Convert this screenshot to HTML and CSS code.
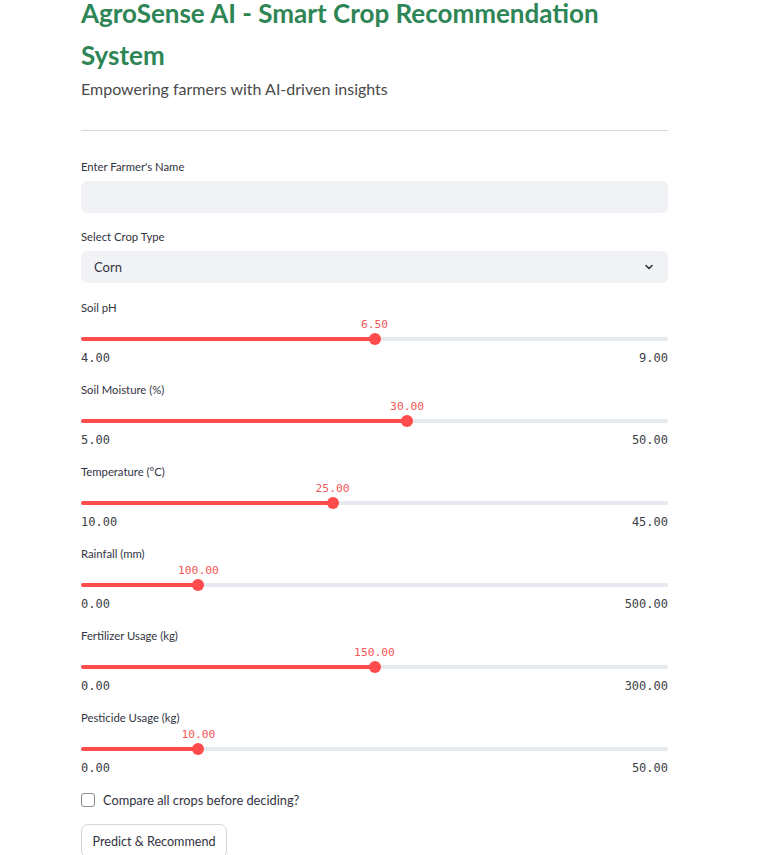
FILE: index.html
```html
<!DOCTYPE html>
<html>
<head>
<meta charset="utf-8">
<link rel="stylesheet" href="styles.css">
</head>
<body>
<main class="app">
  <h1 class="title">AgroSense AI - Smart Crop Recommendation System</h1>
  <p class="subtitle">Empowering farmers with AI-driven insights</p>
  <hr class="divider">

  <div class="field">
    <div class="label">Enter Farmer's Name</div>
    <div class="input"></div>
  </div>

  <div class="field">
    <div class="label">Select Crop Type</div>
    <div class="input select">
      <span>Corn</span>
      <svg class="chev" width="10" height="10" viewBox="0 0 10 10"><path d="M2 3.5 L5 6.5 L8 3.5" fill="none" stroke="#31333F" stroke-width="1.6" stroke-linecap="round" stroke-linejoin="round"/></svg>
    </div>
  </div>

  <div class="slider">
    <div class="label">Soil pH</div>
    <div class="rail"><div class="track"><div class="fill" style="width:50%"></div></div><div class="thumb" style="left:50%"><span class="val">6.50</span></div></div>
    <div class="ticks"><span>4.00</span><span>9.00</span></div>
  </div>

  <div class="slider">
    <div class="label">Soil Moisture (%)</div>
    <div class="rail"><div class="track"><div class="fill" style="width:55.56%"></div></div><div class="thumb" style="left:55.56%"><span class="val">30.00</span></div></div>
    <div class="ticks"><span>5.00</span><span>50.00</span></div>
  </div>

  <div class="slider">
    <div class="label">Temperature (°C)</div>
    <div class="rail"><div class="track"><div class="fill" style="width:42.86%"></div></div><div class="thumb" style="left:42.86%"><span class="val">25.00</span></div></div>
    <div class="ticks"><span>10.00</span><span>45.00</span></div>
  </div>

  <div class="slider">
    <div class="label">Rainfall (mm)</div>
    <div class="rail"><div class="track"><div class="fill" style="width:20%"></div></div><div class="thumb" style="left:20%"><span class="val">100.00</span></div></div>
    <div class="ticks"><span>0.00</span><span>500.00</span></div>
  </div>

  <div class="slider">
    <div class="label">Fertilizer Usage (kg)</div>
    <div class="rail"><div class="track"><div class="fill" style="width:50%"></div></div><div class="thumb" style="left:50%"><span class="val">150.00</span></div></div>
    <div class="ticks"><span>0.00</span><span>300.00</span></div>
  </div>

  <div class="slider">
    <div class="label">Pesticide Usage (kg)</div>
    <div class="rail"><div class="track"><div class="fill" style="width:20%"></div></div><div class="thumb" style="left:20%"><span class="val">10.00</span></div></div>
    <div class="ticks"><span>0.00</span><span>50.00</span></div>
  </div>

  <label class="check"><span class="box"></span><span>Compare all crops before deciding?</span></label>

  <button class="btn">Predict &amp; Recommend</button>
</main>
</body>
</html>
```

FILE: styles.css
```css
* { box-sizing: border-box; }
html, body { margin: 0; padding: 0; background: #fff; }
body {
  font-family: "Lato", "Noto Sans", sans-serif;
  color: #31333F;
  overflow: hidden;
  height: 855px;
}
.app {
  width: 587px;
  margin-left: 81px;
  display: flex;
  flex-direction: column;
}
.title {
  margin: -8px 0 0 0;
  font-size: 26px;
  line-height: 42px;
  font-weight: 700;
  color: #2E8555;
}
.subtitle {
  margin: 1px 0 0 0;
  font-size: 16px;
  line-height: 24px;
  color: #4a4a4a;
}
.divider {
  margin: 29px 0 0 0;
  border: 0;
  border-top: 1px solid #d6d6d6;
  height: 0;
}
.field {
  display: flex;
  flex-direction: column;
  gap: 6px;
  margin-top: 16px;
}
.field:first-of-type { margin-top: 28px; }
.label {
  font-size: 11.3px;
  line-height: 16px;
  color: #31333F;
}
.input {
  height: 32px;
  background: #F0F2F6;
  border-radius: 6px;
}
.select {
  display: flex;
  align-items: center;
  justify-content: space-between;
  padding: 0 14px 0 13px;
  font-size: 13px;
}
.chev { display: block; }
.slider {
  margin-top: 17px;
  display: flex;
  flex-direction: column;
}
.slider + .slider { margin-top: 16px; }
.rail {
  position: relative;
  height: 28px;
}
.track {
  position: absolute;
  left: 0;
  right: 0;
  top: 21px;
  height: 4px;
  border-radius: 2px;
  background: #E6E9EF;
  overflow: hidden;
}
.fill {
  height: 100%;
  background: #FF4B4B;
}
.thumb {
  position: absolute;
  top: 17px;
  width: 12px;
  height: 12px;
  margin-left: -6px;
  border-radius: 50%;
  background: #FF4B4B;
}
.val {
  position: absolute;
  bottom: 13px;
  left: 50%;
  transform: translateX(-50%);
  font-family: "DejaVu Sans Mono", "Liberation Mono", monospace;
  font-size: 11.3px;
  line-height: 14px;
  color: #F25A5A;
  white-space: nowrap;
}
.ticks {
  margin-top: 6px;
  display: flex;
  justify-content: space-between;
  font-family: "DejaVu Sans Mono", "Liberation Mono", monospace;
  font-size: 12px;
  line-height: 16px;
  color: #3d3f48;
}
.check {
  margin-top: 14px;
  display: flex;
  align-items: center;
  gap: 8px;
  height: 20px;
  font-size: 12.8px;
}
.box {
  width: 14px;
  height: 14px;
  border: 1px solid #8a8d96;
  border-radius: 3px;
  background: #fff;
}
.btn {
  margin-top: 14px;
  align-self: flex-start;
  height: 34px;
  width: 146px;
  padding: 0;
  font-family: "Lato", "Noto Sans", sans-serif;
  font-size: 12.6px;
  color: #31333F;
  background: #fff;
  border: 1px solid #d5d6da;
  border-radius: 7px;
}
```
